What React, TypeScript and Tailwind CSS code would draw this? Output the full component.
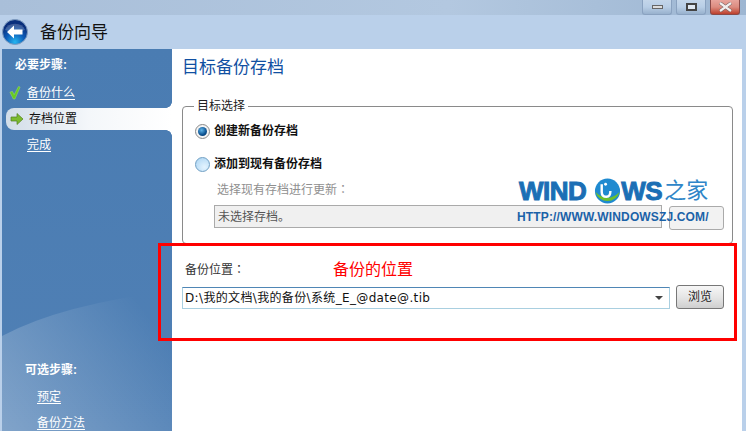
import React from 'react';

const FONT = '[font-family:"Liberation_Sans","Noto_Sans_CJK_SC",sans-serif]';

const BackButton = () => (
  <svg width="26" height="26" viewBox="0 0 26 26" className="shrink-0">
    <defs>
      <radialGradient id="backGlow" cx="50%" cy="90%" r="70%">
        <stop offset="0%" stopColor="#27b6f0" />
        <stop offset="55%" stopColor="#0b5bb8" />
        <stop offset="100%" stopColor="#0a2f7c" />
      </radialGradient>
    </defs>
    <circle cx="13" cy="13" r="12.5" fill="url(#backGlow)" stroke="#7f9cc0" />
    <path d="M3 11 A10.5 9 0 0 1 23 11 Q13 15 3 11Z" fill="#fff" opacity="0.22" />
    <path d="M5 13 L12 6.5 V10.5 H20.5 V15.5 H12 V19.5Z" fill="#fff" />
  </svg>
);

const CheckIcon = () => (
  <svg width="12" height="14" viewBox="0 0 14 16" className="shrink-0">
    <path d="M1 7 L4 6 L6 10 L11 0.5 L13 1 L7 15 L5 15Z" fill="#66cc22" stroke="#a8e070" strokeWidth="0.5" />
  </svg>
);

const ArrowIcon = () => (
  <svg width="14" height="14" viewBox="0 0 14 14" className="shrink-0">
    <path d="M1 5 H7 V1.5 L13 7 L7 12.5 V9 H1Z" fill="#7cbb2e" stroke="#51801c" strokeWidth="0.7" />
  </svg>
);

const Swoosh = () => (
  <svg width="170" height="382" viewBox="0 0 170 382" className="absolute left-0 top-0">
    <defs>
      <linearGradient id="swooshFill" x1="0" y1="1" x2="1" y2="0.4">
        <stop offset="0%" stopColor="#fff" stopOpacity="0.28" />
        <stop offset="100%" stopColor="#fff" stopOpacity="0" />
      </linearGradient>
    </defs>
    <path d="M0 287 Q60 255 170 242 V382 H0Z" fill="url(#swooshFill)" />
  </svg>
);

const Radio = ({ checked }: { checked?: boolean }) =>
  checked ? (
    <span className="flex size-[15px] shrink-0 items-center justify-center rounded-full border border-[#8a8a8a] bg-[#f4f4f4]">
      <span className="size-[9px] rounded-full bg-[radial-gradient(circle_at_40%_35%,#5fb4e8,#0a4f8f_60%,#0a2f55)]" />
    </span>
  ) : (
    <span className="size-[15px] shrink-0 rounded-full border border-[#6f9fc4] bg-[radial-gradient(circle_at_65%_70%,#e4f4ff,#a9d3f2)]" />
  );

const WindowButton = ({ children, close }: { children: React.ReactNode; close?: boolean }) => (
  <div
    className={`flex h-[15px] w-[30px] items-center justify-center rounded-b-[3px] border border-t-0 ${
      close
        ? 'border-[#8a4a48] bg-[linear-gradient(#e8a49c,#dc8c80_50%,#bd3f2c)]'
        : 'border-[#8aa2c0] bg-[linear-gradient(#c4d6ea,#b8cee6_50%,#98b1cd)]'
    }`}
  >
    {children}
  </div>
);

const Watermark = () => (
  <div className="absolute left-[517px] top-[175px] flex w-[200px] flex-col items-start">
    <div className="flex h-[32px] items-center pl-[2px]">
      <span className="text-[26px] font-bold leading-none tracking-[-0.5px] text-[#1b6fb5] [-webkit-text-stroke:1px_#1b6fb5] [font-family:'Liberation_Sans',sans-serif]">
        WIND
      </span>
      <svg width="27" height="28" viewBox="0 0 28 28" className="ml-[8px]">
        <circle cx="14" cy="14" r="13" fill="#1f8ad0" />
        <path d="M1.5 15 A13 13 0 0 0 26.5 15 Q14 27 1.5 15Z" fill="#6cc02e" />
        <path d="M8 7 V15 Q8 20 13 20 Q17 20 17 14" fill="none" stroke="#fff" strokeWidth="2.5" />
        <circle cx="12" cy="7" r="1.5" fill="#fff" />
      </svg>
      <span className="text-[26px] font-bold leading-none tracking-[-0.5px] text-[#1b6fb5] [-webkit-text-stroke:1px_#1b6fb5] [font-family:'Liberation_Sans',sans-serif]">
        WS
      </span>
      <span className="ml-[2px] text-[22px] leading-none text-[#2f86c8]">之家</span>
    </div>
    <span className="mt-[3px] whitespace-nowrap text-[12px] font-bold leading-[14px] tracking-[0.15px] text-[#1b62a8] [font-family:'Liberation_Sans',sans-serif]">
      HTTP://WWW.WINDOWSZJ.COM/
    </span>
  </div>
);

export default function App() {
  return (
    <div className={`relative flex h-[431px] w-[746px] flex-col overflow-hidden bg-[#bad0ea] ${FONT}`}>
      {/* title bar */}
      <div className="flex h-[15px] shrink-0 justify-end gap-[4px] bg-[linear-gradient(90deg,#a9bfd9,#b3c8e0_60%,#9db6d2)] pr-[6px]">
        <WindowButton>
          <span className="h-[4px] w-[11px] border border-[#666] bg-[#ddd]" />
        </WindowButton>
        <WindowButton>
          <span className="h-[8px] w-[11px] border-2 border-[#444] bg-[#dfe8f2]" />
        </WindowButton>
        <WindowButton close>
          <svg width="15" height="10" viewBox="0 0 15 10">
            <path d="M2 1 L13 9 M13 1 L2 9" stroke="#6b5a58" strokeWidth="3.4" />
            <path d="M2 1 L13 9 M13 1 L2 9" stroke="#f2efee" strokeWidth="2.2" />
          </svg>
        </WindowButton>
      </div>

      {/* header */}
      <div className="flex h-[34px] shrink-0 items-center gap-[12px] pl-[2px]">
        <BackButton />
        <span className="text-[17px] leading-none text-[#111]">备份向导</span>
      </div>

      <div className="flex min-h-0 flex-1 pl-[2px] pr-[4px]">
        {/* sidebar */}
        <aside className="relative flex w-[170px] shrink-0 flex-col bg-[linear-gradient(#4a7cb2,#5080b5)] text-[12px] text-white">
          <Swoosh />
          <div className="relative pl-[13px] pt-[8px] text-[12px] font-bold leading-[16px]">必要步骤:</div>
          <div className="relative mt-[9px] flex h-[22px] items-center gap-[6px] pl-[7px]">
            <CheckIcon />
            <span className="underline underline-offset-2">备份什么</span>
          </div>
          <div className="relative mt-[4px] ml-[4px] flex h-[22px] items-center gap-[5px] rounded-l-[8px] bg-[linear-gradient(90deg,#d2dde8,#f4f7fa_50%,#fff)] pl-[4px] text-[#111]">
            <ArrowIcon />
            <span>存档位置</span>
            <span className="absolute right-0 top-[-6px] size-[6px] bg-[radial-gradient(circle_at_0_0,transparent_5.5px,#fff_6px)]" />
            <span className="absolute bottom-[-6px] right-0 size-[6px] bg-[radial-gradient(circle_at_0_100%,transparent_5.5px,#fff_6px)]" />
          </div>
          <div className="relative mt-[4px] flex h-[22px] items-center pl-[25px]">
            <span className="underline underline-offset-2">完成</span>
          </div>
          <div className="relative mt-auto pl-[23px] text-[12px] font-bold leading-[16px]">可选步骤:</div>
          <div className="relative mt-[11px] pl-[35px] leading-[16px]">
            <span className="underline underline-offset-2">预定</span>
          </div>
          <div className="relative mt-[10px] pl-[35px] leading-[16px]">
            <span className="underline underline-offset-2">备份方法</span>
          </div>
        </aside>

        {/* content */}
        <main className="flex min-w-0 flex-1 flex-col bg-white pl-[10px] pr-[10px] text-[12px] text-[#111]">
          <h1 className="mt-[9px] text-[17px] font-normal leading-[20px] text-[#1150a2]">目标备份存档</h1>

          <fieldset className="mt-[21px] h-[145px] w-[551px] rounded-[4px] border border-[#8a8a8a] pl-[12px] pr-[7px]">
            <legend className="ml-[-1px] px-[3px] text-[12px] leading-[14px] text-[#222]">目标选择</legend>
            <label className="mt-[10px] flex items-center gap-[4px] font-bold leading-[16px]">
              <Radio checked />
              创建新备份存档
            </label>
            <label className="mt-[17px] flex items-center gap-[4px] font-bold leading-[16px]">
              <Radio />
              添加到现有备份存档
            </label>
            <div className="mt-[9px] pl-[22px] leading-[16px] text-[#8f8f8f]">
              选择现有存档进行更新<span className="[font-family:'Noto_Sans_CJK_TC']">：</span>
            </div>
            <div className="mt-[7px] flex items-start gap-[7px] pl-[19px]">
              <div className="flex h-[23px] w-[448px] items-center border border-[#aaa] bg-[#f0f0f0] pl-[3px] text-[#555]">
                未选择存档。
              </div>
              <div className="mt-[1px] h-[24px] w-[55px] rounded-[3px] border border-[#aaa] bg-[#f2f2f2]" />
            </div>
          </fieldset>

          <div className="mt-[17px] pl-[3px] leading-[16px] text-[#333]">
            备份位置<span className="[font-family:'Noto_Sans_CJK_TC']">：</span>
          </div>
          <div className="mt-[9px] flex items-start gap-[6px]">
            <div className="flex h-[22px] w-[488px] items-center border border-[#a9cfe0] border-t-[#4f86b5] pl-[2px] text-[12px] tracking-[0.35px] text-[#111] [font-family:'DejaVu_Sans','Noto_Sans_CJK_SC',sans-serif]">
              <span className="flex-1 whitespace-nowrap">D:\我的文档\我的备份\系统_E_@date@.tib</span>
              <span className="mr-[6px] border-x-[4px] border-t-[4px] border-x-transparent border-t-[#444]" />
            </div>
            <button className="mt-[-2px] h-[24px] w-[48px] rounded-[3px] border border-[#777] bg-[linear-gradient(#f6f6f6,#e6e6e6_50%,#cfcfcf)] text-[12px] text-[#222]">
              浏览
            </button>
          </div>
        </main>
      </div>

      <Watermark />

      {/* red annotation over the screenshot */}
      <div className="absolute left-[158px] top-[243px] h-[98px] w-[579px] border-[3px] border-[#f00]" />
      <span className="absolute left-[333px] top-[260px] text-[16px] leading-[20px] text-[#f00]">备份的位置</span>
    </div>
  );
}
